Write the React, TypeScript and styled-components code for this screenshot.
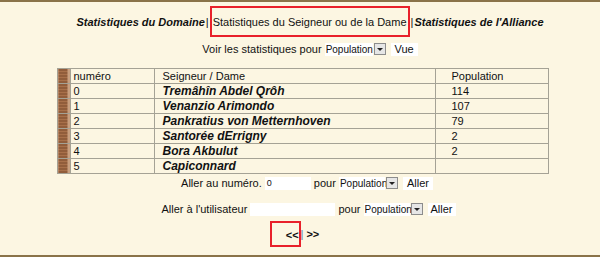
import React from "react";
import styled, { createGlobalStyle } from "styled-components";

const Global = createGlobalStyle`
  html, body { margin: 0; padding: 0; }
  body { font-family: "Liberation Sans", Arial, sans-serif; color: #111; }
`;

const Page = styled.div`
  box-sizing: border-box;
  width: 600px;
  height: 257px;
  background: #fcf6e2;
  border-top: 2px solid #8a7349;
  border-bottom: 2px solid #8a7349;
  display: flex;
  flex-direction: column;
  align-items: center;
  font-size: 11px;
`;

const TitleRow = styled.div`
  margin-top: 4px;
  margin-left: 20px;
  display: flex;
  align-items: center;
  white-space: nowrap;
  font-size: 11px;
`;

const TabLink = styled.span<{ $bold?: boolean }>`
  font-weight: ${(p) => (p.$bold ? "bold" : "normal")};
  font-style: ${(p) => (p.$bold ? "italic" : "normal")};
`;

const Sep = styled.span`
  margin: 0 1px;
`;

const Highlight = styled.span`
  display: inline-block;
  border: 2px solid #e8202a;
  padding: 8px 1px 6px 1px;
  line-height: 13px;
`;

const FormRow = styled.div<{ $mt: number; $ml?: number }>`
  margin-top: ${(p) => p.$mt}px;
  margin-left: ${(p) => p.$ml ?? 0}px;
  display: flex;
  align-items: center;
  white-space: nowrap;
  font-size: 11px;
  height: 14px;
`;

const Select = styled.span<{ $w: number }>`
  display: inline-flex;
  align-items: center;
  box-sizing: border-box;
  width: ${(p) => p.$w}px;
  height: 13px;
  background: #fff;
  font-size: 10px;
  padding-left: 1px;
`;

const Arrow = styled.span`
  display: inline-flex;
  align-items: center;
  justify-content: center;
  box-sizing: border-box;
  width: 12px;
  height: 12px;
  margin-left: 1px;
  border: 1px solid #8c8c8c;
  background: #e6e6e6;
  &::after {
    content: "";
    border-left: 3px solid transparent;
    border-right: 3px solid transparent;
    border-top: 3px solid #222;
  }
`;

const Button = styled.span<{ $w: number }>`
  display: inline-flex;
  align-items: center;
  justify-content: center;
  width: ${(p) => p.$w}px;
  height: 13px;
  background: #fff;
  font-size: 11px;
  margin-left: 5px;
`;

const Input = styled.span<{ $w: number }>`
  display: inline-flex;
  align-items: center;
  width: ${(p) => p.$w}px;
  height: 13px;
  background: #fff;
  font-size: 9px;
  padding-left: 2px;
  box-sizing: border-box;
`;

const Table = styled.table`
  margin-top: 12px;
  margin-left: 5px;
  border-collapse: collapse;
  width: 492px;
  font-size: 11px;
  border: 1px solid #a5a295;
`;

const Cell = styled.td<{ $w?: number; $pl: number; $name?: boolean }>`
  border: 1px solid #a5a295;
  height: 14px;
  padding: 0 0 0 ${(p) => p.$pl}px;
  ${(p) => (p.$w ? `width: ${p.$w}px;` : "")}
  line-height: 14px;
  font-size: ${(p) => (p.$name ? "12px" : "11px")};
  font-weight: ${(p) => (p.$name ? "bold" : "normal")};
  font-style: ${(p) => (p.$name ? "italic" : "normal")};
  white-space: nowrap;
`;

const Deco = styled.td`
  width: 12px;
  padding: 0;
  border: 1px solid #a5a295;
  background:
    linear-gradient(90deg, #c9a080 0, #c9a080 1px, transparent 1px, transparent 10px, #c9a080 10px),
    repeating-linear-gradient(180deg, #7a4a2c 0, #7a4a2c 1px, #a8704a 1px, #a8704a 3px);
`;

const Pager = styled.div`
  margin-top: 5px;
  margin-left: -11px;
  display: flex;
  align-items: center;
  font-weight: bold;
  font-size: 11px;
`;

const PagerBox = styled.span`
  display: inline-block;
  border: 2px solid #e8202a;
  padding: 5px 0 3px 14px;
  line-height: 14px;
`;

const PagerSep = styled.span`
  font-weight: normal;
  color: #5a6fa0;
  margin: 0 3px 0 0;
`;

const rows = [
  { n: "0", name: "Tremâhîn Abdel Qrôh", pop: "114" },
  { n: "1", name: "Venanzio Arimondo", pop: "107" },
  { n: "2", name: "Pankratius von Metternhoven", pop: "79" },
  { n: "3", name: "Santorée dErrigny", pop: "2" },
  { n: "4", name: "Bora Akbulut", pop: "2" },
  { n: "5", name: "Capiconnard", pop: "" },
];

const PopSelect = ({ w }: { w: number }) => (
  <>
    <Select $w={w}>Population</Select>
    <Arrow />
  </>
);

export default function App() {
  return (
    <>
      <Global />
      <Page>
        <TitleRow>
          <TabLink $bold>Statistiques du Domaine</TabLink>
          <Sep>|</Sep>
          <Highlight>
            <TabLink>Statistiques du Seigneur ou de la Dame</TabLink>
          </Highlight>
          <Sep>|</Sep>
          <TabLink $bold>Statistiques de l'Alliance</TabLink>
        </TitleRow>
        <FormRow $mt={5} $ml={20}>
          Voir les statistiques pour&nbsp;
          <PopSelect w={48} />
          <Button $w={27}>Vue</Button>
        </FormRow>
        <Table>
          <tbody>
            <tr>
              <Deco />
              <Cell $w={80} $pl={3}>numéro</Cell>
              <Cell $w={272} $pl={8}>Seigneur / Dame</Cell>
              <Cell $pl={16}>Population</Cell>
            </tr>
            {rows.map((r) => (
              <tr key={r.n}>
                <Deco />
                <Cell $pl={3}>{r.n}</Cell>
                <Cell $pl={8} $name>{r.name}</Cell>
                <Cell $pl={16}>{r.pop}</Cell>
              </tr>
            ))}
          </tbody>
        </Table>
        <FormRow $mt={2} $ml={14}>
          Aller au numéro.&nbsp;
          <Input $w={46}>0</Input>
          &nbsp;pour&nbsp;
          <PopSelect w={46} />
          <Button $w={30}>Aller</Button>
        </FormRow>
        <FormRow $mt={12} $ml={17}>
          Aller à l'utilisateur&nbsp;
          <Input $w={85}></Input>
          &nbsp;pour&nbsp;
          <PopSelect w={46} />
          <Button $w={28}>Aller</Button>
        </FormRow>
        <Pager>
          <PagerBox>&lt;&lt;</PagerBox>
          <PagerSep>|</PagerSep>
          &gt;&gt;
        </Pager>
      </Page>
    </>
  );
}
